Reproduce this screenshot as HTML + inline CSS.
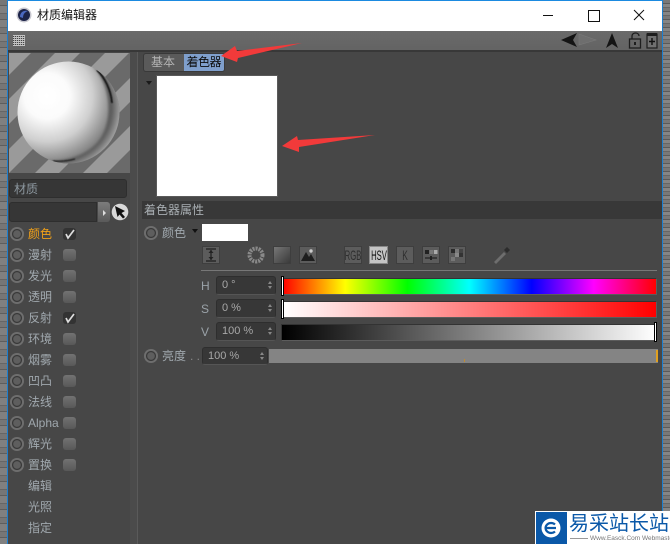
<!DOCTYPE html>
<html><head><meta charset="utf-8"><style>
html,body{margin:0;padding:0}
body{width:670px;height:544px;overflow:hidden;position:relative;background:#474747;font-family:"Liberation Sans","Noto Sans CJK SC",sans-serif;font-size:12px;color:#a0a8ae}
.a{position:absolute}
.t{position:absolute;white-space:nowrap;line-height:16px;height:16px}
.rad{position:absolute;width:14px;height:14px;border-radius:50%;background:radial-gradient(circle,#5e5e5e 0 3.5px,#3a3a3a 4px 4.8px,#6e6e6e 5.3px 7px)}
.cb{position:absolute;left:63px;width:13px;height:12px;border-radius:3px;background:linear-gradient(#727272,#585858)}
.cb.on{background:#333}
.f{position:absolute;background:#373737;border-radius:3px;border:1px solid #2e2e2e;border-bottom-color:#555;box-sizing:border-box;color:#a8a8a8;line-height:16px;padding-left:5px;font-size:11px}
.f:after{content:"";position:absolute;right:3px;top:4px;border:2px solid transparent;border-bottom:3px solid #888;border-top:0}
.f:before{content:"";position:absolute;right:3px;top:9px;border:2px solid transparent;border-top:3px solid #888;border-bottom:0}
.ib{position:absolute;top:246px;width:18px;height:18px;background:#5c5c5c;border:1px solid #3e3e3e;box-sizing:border-box}
.lb{position:absolute;top:246px;width:40px;height:18px;line-height:18px;text-align:center;font-size:14px;white-space:nowrap;color:#2e2e2e}
.bar{position:absolute;box-sizing:border-box;border:1px solid #333;border-bottom-color:#5c5c5c;border-right-color:#5c5c5c}
.h{position:absolute;width:1px;background:#fff;border:1px solid #000}
</style></head><body>
<!-- outer desktop strips -->
<div class="a" style="left:0;top:0;width:8px;height:544px;background:repeating-linear-gradient(#767676 0 5px,#5e5e5e 5px 6px,#808080 6px 13px,#666 13px 14px)"></div>
<div class="a" style="left:663px;top:0;width:7px;height:511px;background:repeating-linear-gradient(#787878 0 3px,#5a5a5a 3px 4px,#858585 4px 7px,#666 7px 8px)"></div>
<div class="a" style="left:7px;top:0;width:656px;height:544px;background:#474747;border-left:1px solid #1b7fd0;border-right:1px solid #1b7fd0;box-sizing:border-box"></div>
<!-- title bar -->
<div class="a" style="left:7px;top:0;width:656px;height:31px;background:#fff;border-top:1px solid #1b8ae0;border-left:1px solid #1b7fd0;border-right:1px solid #1b7fd0;box-sizing:border-box"></div>
<svg class="a" style="left:16px;top:7px" width="16" height="16"><circle cx="8" cy="8" r="7.500" fill="#c8c8d0"/><circle cx="8" cy="8" r="6" fill="#1c2348"/><path d="M4 10C4 5 8 3 12 4C9 5 7 7 7 11Z" fill="#4a68c0"/></svg>
<div class="t" style="left:37px;top:7px;color:#111;font-size:12px">材质编辑器</div>
<div class="a" style="left:543px;top:15px;width:10px;height:1px;background:#111"></div>
<div class="a" style="left:588px;top:10px;width:10px;height:10px;border:1px solid #111"></div>
<svg class="a" style="left:633px;top:9px" width="12" height="12"><path d="M1 1L11 11M11 1L1 11" stroke="#111" fill="none"/></svg>
<!-- toolbar -->
<div class="a" style="left:8px;top:31px;width:654px;height:20px;background:linear-gradient(#6a6a6a,#636363)"></div>
<div class="a" style="left:8px;top:50px;width:654px;height:2px;background:#383838"></div>
<div class="a" style="left:13px;top:35px;width:12px;height:11px;background-image:repeating-linear-gradient(0deg,#c4c4c4 0 1px,transparent 1px 2px),repeating-linear-gradient(90deg,#444 0 1px,#aaa 1px 2px)"></div>
<svg class="a" style="left:558px;top:30px" width="104" height="20">
<path d="M3 10L19 3L15 10L19 17Z" fill="#141414"/>
<path d="M21 4L38 10L21 15Z" fill="#6e6e6e" stroke="#7a7a7a" stroke-width=".6"/>
<path d="M54 3L60 18L54 14L48 18Z" fill="#141414"/>
<rect x="71.500" y="9" width="11" height="9" fill="none" stroke="#1e1e1e" stroke-width="1.300"/><path d="M74 9V6C74 2 81 2 81 6" stroke="#1e1e1e" fill="none" stroke-width="1.300"/><rect x="76" y="12" width="2" height="3" fill="#1e1e1e"/>
<rect x="89" y="4" width="10" height="14" fill="#707070" stroke="#1e1e1e" stroke-width="1.200"/><rect x="89" y="3" width="10" height="3" fill="#1e1e1e"/><path d="M94 8V15M91 11.500H97" stroke="#111" stroke-width="1.400"/>
</svg>
<!-- left panel -->
<div class="a" style="left:130px;top:52px;width:8px;height:492px;background:#4b4b4b;border-right:1px solid #5a5a5a;box-sizing:border-box"></div>
<svg class="a" style="left:9px;top:53px" width="121" height="120" viewBox="0 0 121 120">
<defs>
<radialGradient id="sp" gradientUnits="userSpaceOnUse" cx="38" cy="43" r="76"><stop offset="0" stop-color="#fff"/><stop offset=".3" stop-color="#fbfbfb"/><stop offset=".6" stop-color="#cfcfcf"/><stop offset=".8" stop-color="#999"/><stop offset="1" stop-color="#666"/></radialGradient>
<radialGradient id="cr" gradientUnits="userSpaceOnUse" cx="50" cy="55" r="62"><stop offset=".72" stop-color="#555"/><stop offset=".85" stop-color="#5c5c5c"/><stop offset="1" stop-color="#a4a4a4"/></radialGradient>
<clipPath id="c"><circle cx="59.500" cy="59.500" r="51"/></clipPath>
<filter id="bl" x="-20%" y="-20%" width="140%" height="140%"><feGaussianBlur stdDeviation="1.200"/></filter>
<filter id="bs" x="-50%" y="-50%" width="200%" height="200%"><feGaussianBlur stdDeviation=".6"/></filter></defs>
<rect width="121" height="120" fill="#6a6a6a"/>
<g fill="#9a9a9a">
<path d="M-3 0L22 0L-108 130L-133 130Z"/>
<path d="M46 0L71 0L-59 130L-84 130Z"/>
<path d="M96 0L120 0L-10 130L-34 130Z"/>
<path d="M146 0L170 0L40 130L16 130Z"/>
<path d="M194 0L218 0L88 130L64 130Z"/>
</g>
<circle cx="59.500" cy="59.500" r="51" fill="url(#sp)"/>
<g clip-path="url(#c)">
<path filter="url(#bl)" d="M84 13C104 35 104 72 88 90C76 103 58 108 38 108L60 125L125 80L100 10Z" fill="url(#cr)"/>
<path filter="url(#bs)" d="M88 17C96 25 102 37 103 50" stroke="#111" stroke-width="1.600" fill="none"/>
<path filter="url(#bs)" d="M66 106Q55 109 44 108" stroke="#222" stroke-width="1.300" fill="none"/>
</g>
</svg>
<div class="a" style="left:9px;top:179px;width:118px;height:19px;background:#363636;border-radius:3px;border:1px solid #2e2e2e;box-sizing:border-box"></div>
<div class="t" style="left:14px;top:181px;color:#8c979f">材质</div>
<div class="a" style="left:9px;top:202px;width:88px;height:20px;background:#363636;border-radius:3px 0 0 3px;border:1px solid #2e2e2e;box-sizing:border-box"></div>
<div class="a" style="left:98px;top:202px;width:12px;height:20px;background:linear-gradient(#7c7c7c,#5a5a5a);border-radius:0 3px 3px 0"></div>
<div class="a" style="left:103px;top:210px;border:3px solid transparent;border-left:3px solid #ddd;border-right:0"></div>
<svg class="a" style="left:111px;top:203px" width="18" height="18"><circle cx="9" cy="9" r="8.300" fill="#d8d8d8"/><path d="M4 3L14 8L10.500 10L14 14L12 15.500L8.500 11.500L6.500 14Z" fill="#111"/></svg>
<div class="rad" style="left:10px;top:227px"></div><div class="t" style="left:28px;top:226px;color:#f0a018">颜色</div>
<div class="cb on" style="top:228px"></div><svg class="a" style="left:63px;top:228px" width="13" height="12"><path d="M3 6L5 10L11 2" stroke="#ddd" stroke-width="1.700" fill="none"/></svg>
<div class="rad" style="left:10px;top:248px"></div><div class="t" style="left:28px;top:247px">漫射</div><div class="cb" style="top:249px"></div>
<div class="rad" style="left:10px;top:269px"></div><div class="t" style="left:28px;top:268px">发光</div><div class="cb" style="top:270px"></div>
<div class="rad" style="left:10px;top:290px"></div><div class="t" style="left:28px;top:289px">透明</div><div class="cb" style="top:291px"></div>
<div class="rad" style="left:10px;top:311px"></div><div class="t" style="left:28px;top:310px">反射</div>
<div class="cb on" style="top:312px"></div><svg class="a" style="left:63px;top:312px" width="13" height="12"><path d="M3 6L5 10L11 2" stroke="#ddd" stroke-width="1.700" fill="none"/></svg>
<div class="rad" style="left:10px;top:332px"></div><div class="t" style="left:28px;top:331px">环境</div><div class="cb" style="top:333px"></div>
<div class="rad" style="left:10px;top:353px"></div><div class="t" style="left:28px;top:352px">烟雾</div><div class="cb" style="top:354px"></div>
<div class="rad" style="left:10px;top:374px"></div><div class="t" style="left:28px;top:373px">凹凸</div><div class="cb" style="top:375px"></div>
<div class="rad" style="left:10px;top:395px"></div><div class="t" style="left:28px;top:394px">法线</div><div class="cb" style="top:396px"></div>
<div class="rad" style="left:10px;top:416px"></div><div class="t" style="left:28px;top:415px">Alpha</div><div class="cb" style="top:417px"></div>
<div class="rad" style="left:10px;top:437px"></div><div class="t" style="left:28px;top:436px">辉光</div><div class="cb" style="top:438px"></div>
<div class="rad" style="left:10px;top:458px"></div><div class="t" style="left:28px;top:457px">置换</div><div class="cb" style="top:459px"></div>
<div class="t" style="left:28px;top:478px">编辑</div>
<div class="t" style="left:28px;top:499px">光照</div>
<div class="t" style="left:28px;top:520px">指定</div>
<!-- tabs -->
<div class="a" style="left:143px;top:53px;width:41px;height:19px;background:#5a5a5a;border:1px solid #393939;border-right:0;border-radius:3px 0 0 3px;box-sizing:border-box"></div>
<div class="t" style="left:151px;top:54px;color:#b4b4b4">基本</div>
<div class="a" style="left:184px;top:53px;width:41px;height:19px;background:#7f9fcc;border:1px solid #393939;border-left:0;border-radius:0 3px 3px 0;box-sizing:border-box"></div>
<div class="t" style="left:186.500px;top:54px;color:#0c0c0c;letter-spacing:-.5px">着色器</div>
<div class="a" style="left:146px;top:81px;border:3px solid transparent;border-top:4px solid #1a1a1a;border-bottom:0"></div>
<div class="a" style="left:156px;top:75px;width:122px;height:122px;box-sizing:border-box;background:#fff;border:1px solid #5a5a5a"></div>
<!-- attributes -->
<div class="a" style="left:142px;top:201px;width:520px;height:18px;background:#383838"></div>
<div class="t" style="left:144px;top:202px;color:#a8aeb2">着色器属性</div>
<div class="rad" style="left:144px;top:226px"></div><div class="t" style="left:162px;top:225px">颜色</div>
<div class="a" style="left:192px;top:229px;border:3px solid transparent;border-top:4px solid #111;border-bottom:0"></div>
<div class="a" style="left:202px;top:224px;width:46px;height:17px;background:#fff"></div>
<!-- icon row -->
<div class="ib" style="left:202px"></div>
<svg class="a" style="left:202px;top:246px" width="18" height="18"><path d="M4 3H14M4 15H14M9 4V14" stroke="#1e1e1e" stroke-width="1.200"/><path d="M6.500 7L9 4L11.500 7ZM6.500 11L9 14L11.500 11Z" fill="#222"/></svg>
<svg class="a" style="left:247px;top:246px" width="18" height="18"><circle cx="9" cy="9" r="6.500" fill="none" stroke="#8a8a8a" stroke-width="4" stroke-dasharray="2 1"/></svg>
<div class="ib" style="left:273px;background:linear-gradient(135deg,#777,#3a3a3a)"></div>
<div class="ib" style="left:299px"></div>
<svg class="a" style="left:299px;top:246px" width="18" height="18"><path d="M2 15L7 6L10 11L12 8L16 15Z" fill="#1e1e1e"/><circle cx="12" cy="5" r="1.700" fill="#ccc"/></svg>
<div class="ib" style="left:344px"></div><div class="lb" style="left:333px;transform:scaleX(.55)">RGB</div>
<div class="ib" style="left:369px;width:19px;background:#c4c4c4;border-color:#888"></div><div class="lb" style="left:358.500px;color:#111;transform:scaleX(.55)">HSV</div>
<div class="ib" style="left:396px"></div><div class="lb" style="left:385px;transform:scaleX(.6)">K</div>
<div class="ib" style="left:422px"></div>
<svg class="a" style="left:422px;top:246px" width="18" height="18"><rect x="3" y="4" width="4" height="4" fill="#222"/><rect x="7.500" y="4" width="4" height="4" fill="#777"/><rect x="12" y="4" width="3.500" height="4" fill="#aaa"/><path d="M3 12H15" stroke="#222" stroke-width="1.200"/><rect x="8" y="10" width="2" height="4" fill="#222"/></svg>
<div class="ib" style="left:448px"></div>
<svg class="a" style="left:448px;top:246px" width="18" height="18"><rect x="3" y="3" width="4" height="4" fill="#2a2a2a"/><rect x="7" y="3" width="4" height="4" fill="#777"/><rect x="11" y="3" width="4" height="4" fill="#444"/><rect x="7" y="7" width="4" height="4" fill="#888"/><rect x="11" y="7" width="4" height="4" fill="#333"/><rect x="3" y="11" width="4" height="4" fill="#777"/></svg>
<svg class="a" style="left:492px;top:245px" width="20" height="20"><path d="M2 17L12 7L14 9L4 19Z" fill="#6e6e6e"/><path d="M12 5L15 2L18 5L15 8Z" fill="#2c2c2c"/></svg>
<div class="a" style="left:201px;top:270px;width:456px;height:1px;background:#777"></div>
<!-- HSV -->
<div class="t" style="left:201px;top:278px;color:#9aa2a8">H</div>
<div class="t" style="left:201px;top:301px;color:#9aa2a8">S</div>
<div class="t" style="left:201px;top:324px;color:#9aa2a8">V</div>
<div class="f" style="left:216px;top:276px;width:60px;height:19px">0 °</div>
<div class="f" style="left:216px;top:299px;width:60px;height:19px">0 %</div>
<div class="f" style="left:216px;top:322px;width:60px;height:19px">100 %</div>
<div class="bar" style="left:282px;top:278px;width:375px;height:17px;background:linear-gradient(90deg,#f00,#ff0 16.67%,#0f0 33.33%,#0ff 50%,#00f 66.67%,#f0f 83.33%,#f00)"></div>
<div class="bar" style="left:282px;top:301px;width:375px;height:17px;background:linear-gradient(90deg,#fff,#f00)"></div>
<div class="bar" style="left:281px;top:324px;width:376px;height:17px;background:linear-gradient(90deg,#000,#fff)"></div>
<div class="h" style="left:281px;top:276px;height:18px"></div>
<div class="h" style="left:281px;top:299px;height:18px"></div>
<div class="h" style="left:654px;top:322px;height:18px"></div>
<!-- brightness -->
<div class="rad" style="left:144px;top:349px"></div><div class="t" style="left:162px;top:348px">亮度</div><div class="t" style="left:190px;top:348px;color:#888">. .</div>
<div class="f" style="left:202px;top:347px;width:66px;height:18px">100 %</div>
<div class="a" style="left:269px;top:349px;width:389px;height:14px;background:#848484"></div>
<div class="a" style="left:464px;top:359px;width:1px;height:3px;background:#c08a30"></div>
<div class="a" style="left:656px;top:350px;width:2px;height:12px;background:#e0a020"></div>
<!-- arrows -->
<svg class="a" style="left:0;top:0" width="670" height="544"><path d="M221 56L235 46L237 51L302 43L238 58L237 62Z" fill="#f23a3a"/><path d="M282 146L297 136L298 140L375 135L299 147L299 152Z" fill="#f23a3a"/></svg>
<!-- watermark -->
<div class="a" style="left:535px;top:511px;width:135px;height:33px;background:#fff"></div>
<div class="a" style="left:536px;top:512px;width:31px;height:32px;background:#0a58a8"></div>
<svg class="a" style="left:541px;top:518px" width="20" height="20"><circle cx="10" cy="10" r="9.500" fill="#fff"/><path d="M5 10H15M14 6.500A5.500 5 0 1 0 14 13.500" stroke="#0a58a8" stroke-width="2.200" fill="none"/></svg>
<div class="t" style="left:569px;top:512px;height:24px;line-height:24px;font-size:20px;color:#0a58a8">易采站长站</div>
<div class="a" style="left:570px;top:538px;width:18px;height:1px;background:#999"></div>
<div class="t" style="left:590px;top:534px;height:9px;line-height:9px;font-size:6.500px;color:#777">Www.Easck.Com Webmaster</div>
</body></html>
